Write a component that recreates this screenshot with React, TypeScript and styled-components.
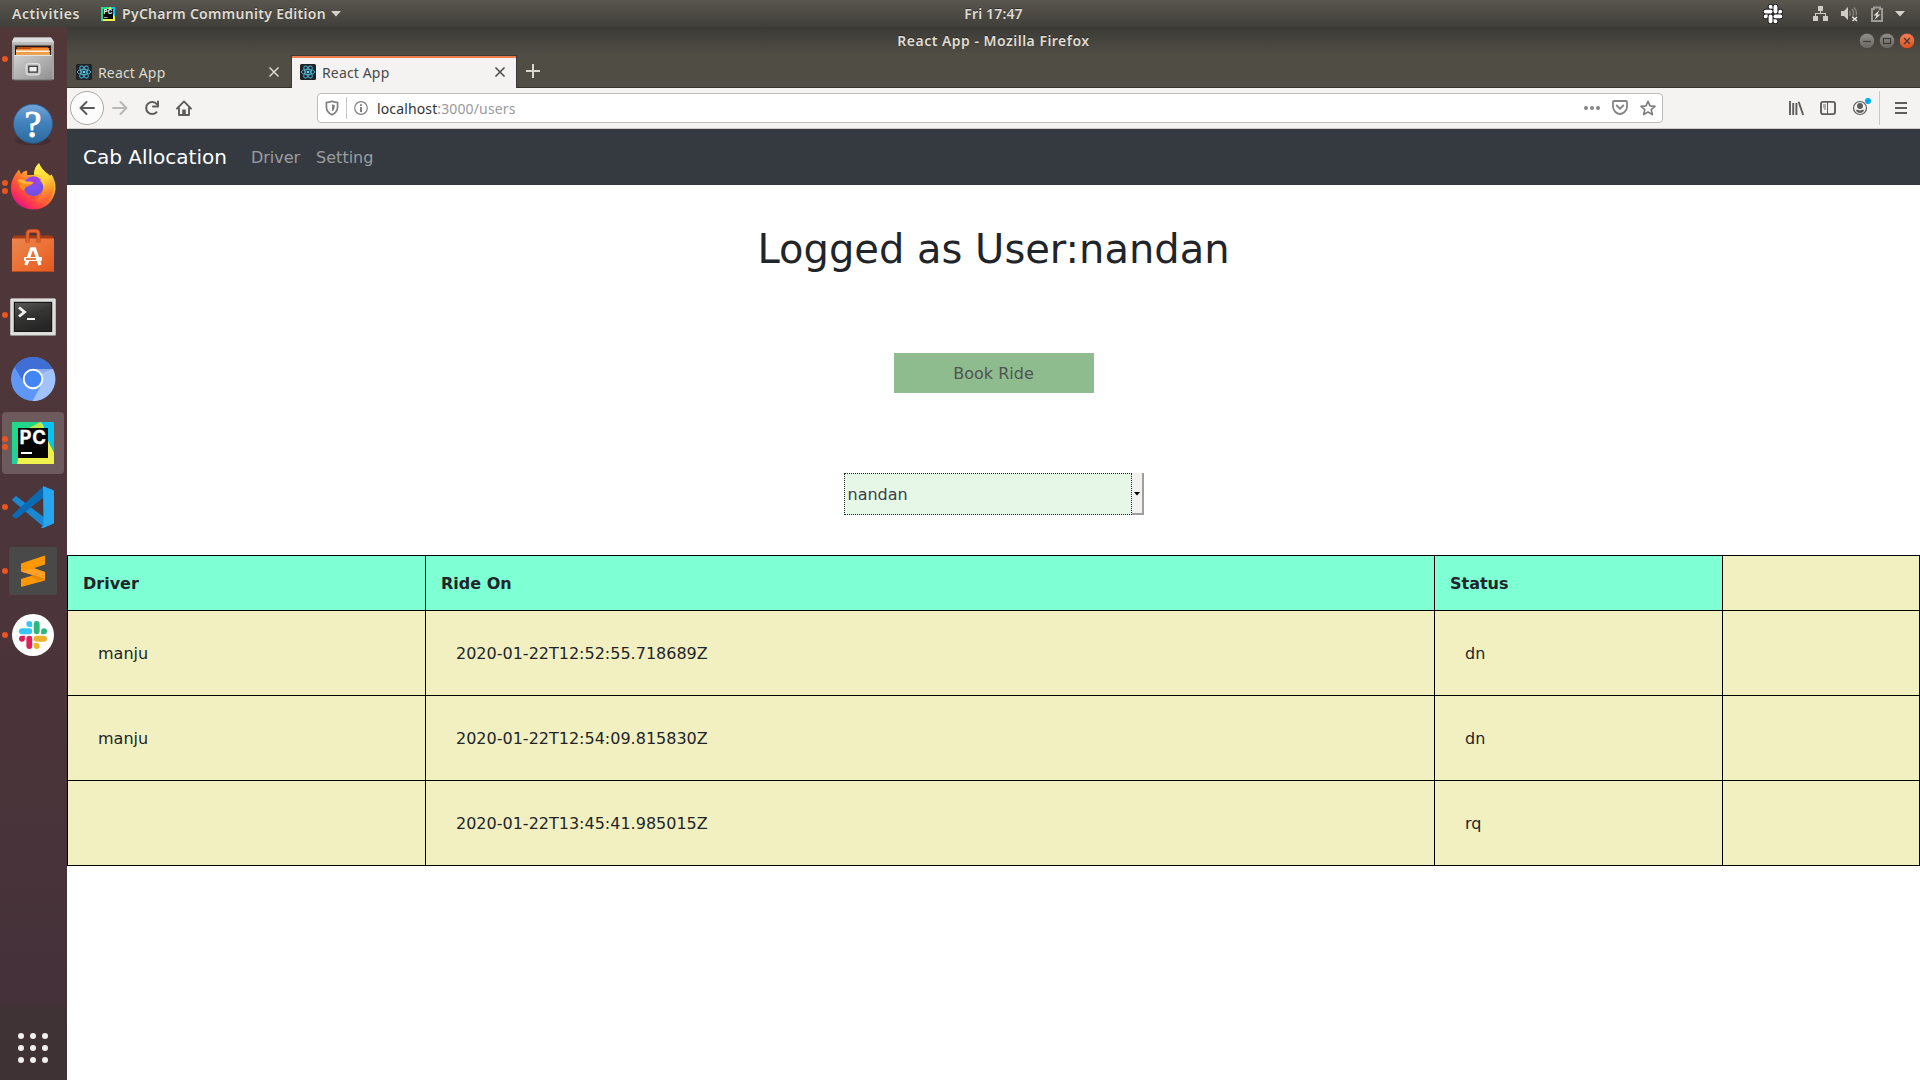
import React from "react";
import styled, { createGlobalStyle } from "styled-components";

const GlobalStyle = createGlobalStyle`
  *, *::before, *::after { box-sizing: border-box; }
  body { margin: 0; background: #fff; overflow: hidden; }
`;

const systemFont = `"Noto Sans", "Open Sans", sans-serif`;
const pageFont = `"DejaVu Sans", sans-serif`;

const Desktop = styled.div`
  width: 1920px;
  height: 1080px;
  display: grid;
  grid-template-rows: 27px 1fr;
  font-family: ${systemFont};
`;

const TopBar = styled.header`
  display: grid;
  grid-template-columns: 1fr auto 1fr;
  align-items: center;
  background: linear-gradient(#59564e, #403f3a);
  color: #dfdbd2;
  font-weight: 600;
  font-size: 14px;
  line-height: 27px;
`;

const BarGroup = styled.div<{ $end?: boolean }>`
  display: flex;
  align-items: center;
  height: 27px;
  padding-left: ${(p) => (p.$end ? 0 : 12)}px;
  padding-right: ${(p) => (p.$end ? 15 : 0)}px;
  justify-content: ${(p) => (p.$end ? "flex-end" : "flex-start")};
`;

const BarText = styled.span<{ $width?: number; $track?: number }>`
  width: ${(p) => (p.$width ? `${p.$width}px` : "auto")};
  letter-spacing: ${(p) => p.$track ?? 0}px;
  white-space: nowrap;
  text-shadow: 0 -1px 0 rgba(0, 0, 0, 0.35);
`;

const Clock = styled(BarText)`
  margin-left: 67px;
`;

const WindowTitle = styled(BarText)`
  padding-bottom: 2px;
`;

const Icon = styled.svg<{ $ml?: number }>`
  display: block;
  flex: none;
  margin-left: ${(p) => p.$ml ?? 0}px;
`;

const Workspace = styled.div`
  display: grid;
  grid-template-columns: 67px 1853px;
  min-height: 0;
`;

const Dock = styled.nav`
  display: flex;
  flex-direction: column;
  background: linear-gradient(#523739 0%, #4d363a 40%, #48333a 80%, #443139 92.5%, #403335 93%, #3f3235 100%);
`;

const DockItem = styled.div<{ $active?: boolean }>`
  position: relative;
  display: flex;
  justify-content: center;
  align-items: center;
  width: 62px;
  height: 62px;
  margin: 1px 3px 1px 2px;
  border-radius: 4px;
  background: ${(p) => (p.$active ? "rgba(255,255,255,0.18)" : "transparent")};
`;

const Running = styled.div`
  position: absolute;
  left: 0;
  top: 0;
  height: 62px;
  display: flex;
  flex-direction: column;
  justify-content: center;
  gap: 2px;
`;

const Dot = styled.i`
  width: 6px;
  height: 6px;
  border-radius: 50%;
  background: #e95420;
`;

const AppsButton = styled.div`
  margin-top: auto;
  height: 64px;
  display: grid;
  grid-template-columns: repeat(3, 6px);
  grid-auto-rows: 6px;
  gap: 6px;
  justify-content: center;
  align-content: center;
  padding-right: 1px;
`;

const AppDot = styled.i`
  border-radius: 50%;
  background: #f2f0ef;
`;

const Window = styled.main`
  display: flex;
  flex-direction: column;
  background: #fff;
`;

const TitleBar = styled.div`
  height: 28px;
  display: grid;
  grid-template-columns: 1fr auto 1fr;
  align-items: center;
  background: linear-gradient(#3b3a35, #504d45);
  color: #dfdbd2;
  font-size: 14px;
  font-weight: 600;
`;

const WindowButtons = styled.div`
  display: flex;
  justify-content: flex-end;
  gap: 4px;
  padding-right: 5px;
`;

const Tabs = styled.div`
  height: 33px;
  display: flex;
  background: #504d45;
  border-bottom: 1px solid #33322d;
`;

const Tab = styled.div<{ $active?: boolean }>`
  width: ${(p) => (p.$active ? 226 : 224)}px;
  height: 33px;
  display: flex;
  align-items: center;
  padding: ${(p) => (p.$active ? "0 10px 0 8px" : "1px 11px 0 9px")};
  color: ${(p) => (p.$active ? "#4a4a4a" : "#dcd9d2")};
  background: ${(p) => (p.$active ? "#f4f3f2" : "transparent")};
  border: solid #3a3934;
  border-width: ${(p) => (p.$active ? "1px 1px 0" : "0")};
  box-shadow: ${(p) => (p.$active ? "inset 0 2px #f27a4f" : "none")};
  font-size: 14px;
  letter-spacing: 0.15px;
`;

const TabTitle = styled.span`
  margin-left: 6px;
  flex: 1;
  white-space: nowrap;
`;

const Toolbar = styled.div`
  height: 41px;
  display: flex;
  align-items: center;
  padding: 0 0 1px 3px;
  background: #f4f3f2;
  border-bottom: 1px solid #cbcac9;
  color: #5d5d5d;
`;

const BackButton = styled.div`
  width: 34px;
  height: 34px;
  border-radius: 50%;
  border: 1px solid #aaa9a8;
  background: #fcfcfc;
  display: grid;
  place-items: center;
`;

const UrlBox = styled.div`
  width: 1346px;
  height: 30px;
  margin-left: 125px;
  display: flex;
  align-items: center;
  padding: 0 6px;
  background: #fff;
  border: 1px solid #bdbcbb;
  border-radius: 4px;
  color: #777;
`;

const Rule = styled.i<{ $height: number; $ml: number }>`
  width: 1px;
  height: ${(p) => p.$height}px;
  margin-left: ${(p) => p.$ml}px;
  background: #c9c8c7;
`;

const Address = styled.span`
  flex: 1;
  margin-left: 9px;
  padding-top: 1px;
  font-size: 14px;
  letter-spacing: 0.13px;
  color: #999;
`;

const Host = styled.span`
  color: #333;
`;

const NavBar = styled.nav`
  height: 56px;
  display: flex;
  align-items: center;
  padding: 0 16px;
  background: #343a40;
  font-family: ${pageFont};
  font-size: 16px;
`;

const Brand = styled.span`
  font-size: 20px;
  color: #fff;
  margin-right: 24px;
`;

const NavLink = styled.span`
  color: rgba(255, 255, 255, 0.5);
  margin-right: 16px;
`;

const Page = styled.section`
  display: flex;
  flex-direction: column;
  align-items: center;
  font-family: ${pageFont};
  font-size: 16px;
  color: #212529;
`;

const Heading = styled.h1`
  margin: 40px 0 80px;
  font-size: 40px;
  line-height: 48px;
  font-weight: 400;
`;

const BookButton = styled.button`
  width: 200px;
  height: 40px;
  border: 0;
  padding: 0;
  background: #8fbc8f;
  color: #505350;
  font: 16px ${pageFont};
`;

const Picker = styled.div`
  width: 300px;
  height: 42px;
  margin: 80px 0 40px;
  display: flex;
`;

const PickerValue = styled.div`
  width: 288px;
  border: 1px dotted #222;
  background: #e6f7e8;
  color: #3c4043;
  line-height: 41px;
  padding-left: 3px;
`;

const PickerArrow = styled.div`
  width: 12px;
  display: grid;
  place-items: center;
  padding: 1px 0 0 1px;
  background: #f2f1f0;
  border: solid #9f9e9d;
  border-width: 0 2px 2px 0;
`;

const Table = styled.table`
  width: 1853px;
  table-layout: fixed;
  border-collapse: separate;
  border-spacing: 0;
  border: solid #000;
  border-width: 1px 0 0 1px;
  background: #f2f0c1;
`;

const HeadCell = styled.th<{ $blank?: boolean; $width: number }>`
  width: ${(p) => p.$width}px;
  height: 55px;
  padding: 0 15px;
  text-align: left;
  background: ${(p) => (p.$blank ? "transparent" : "#7fffd4")};
  border: solid #000;
  border-width: 0 1px 1px 0;
`;

const Cell = styled.td`
  height: 85px;
  padding: 0 30px;
  border: solid #000;
  border-width: 0 1px 1px 0;
`;

const SlackMark = ({ colors }: { colors: string[] }) => (
  <>
    {colors.map((c, i) => (
      <g key={i} fill={c} transform={`rotate(${i * 90} 12 12)`}>
        <path d="M5.042 15.165a2.520 2.520 0 1 1-2.520-2.520h2.520z" />
        <rect x="6.313" y="12.645" width="5.042" height="11.355" rx="2.521" />
      </g>
    ))}
  </>
);

const FilesIcon = () => (
  <Icon width="48" height="48" viewBox="0 -0.5 48 48">
    <defs>
      <linearGradient id="cab" x2="1" y2="1">
        <stop stopColor="#d0d0d0" />
        <stop offset="1" stopColor="#909090" />
      </linearGradient>
    </defs>
    <path d="M5 2h37l3 4v38H3V6z" fill="#a4a4a4" />
    <path d="M5 2h37l3 4.500H3z" fill="#dcdcdc" />
    <path d="M3 6.500h42V9H3z" fill="#bdbdbd" />
    <rect x="6" y="10" width="36" height="10" fill="#291c16" />
    <rect x="8" y="11.500" width="31" height="8" fill="#b64a12" />
    <path d="M7 13.500h14l2-1h17v8H7z" fill="#f08a34" />
    <path d="M7 15h34v1.500H7z" fill="#fff2df" />
    <path d="M7 17h34v3H7z" fill="#eca24e" />
    <rect x="5" y="19.500" width="38" height="25" rx="1" fill="url(#cab)" />
    <path d="M5 20h38" stroke="#e4e4e4" />
    <path d="M5 44.500h38" stroke="#6f6f6f" />
    <rect x="17" y="28" width="14" height="11.500" rx="2.500" fill="#c7c7c7" stroke="#e2e2e2" />
    <rect x="19.800" y="30.800" width="8.500" height="5.800" fill="#eee" stroke="#3a3a3a" strokeWidth="1.300" />
  </Icon>
);

const HelpIcon = () => (
  <Icon width="48" height="48" viewBox="0 -0.8 48 48">
    <defs>
      <linearGradient id="help" x2="0" y2="1">
        <stop stopColor="#74a4da" />
        <stop offset="0.45" stopColor="#4383bd" />
        <stop offset="1" stopColor="#2c6ba0" />
      </linearGradient>
    </defs>
    <ellipse cx="24" cy="41" rx="18" ry="4.500" fill="#000" opacity="0.15" />
    <circle cx="24" cy="24" r="19.500" fill="url(#help)" stroke="#265f90" strokeWidth="0.800" />
    <text x="24" y="37" textAnchor="middle" fontFamily="Liberation Serif, serif" fontSize="38" fill="#fff" stroke="#fff" strokeWidth="0.900">?</text>
  </Icon>
);

const FirefoxIcon = () => (
  <Icon width="48" height="48" viewBox="0 1 48 48">
    <defs>
      <linearGradient id="fxBody" x1="0.85" y1="0.1" x2="0.2" y2="0.95">
        <stop stopColor="#fff44f" />
        <stop offset="0.3" stopColor="#ffb52e" />
        <stop offset="0.55" stopColor="#ff6b2d" />
        <stop offset="0.8" stopColor="#ff3750" />
        <stop offset="1" stopColor="#e4108a" />
      </linearGradient>
      <linearGradient id="fxTail" x2="0.2" y2="1">
        <stop stopColor="#fff44f" />
        <stop offset="0.45" stopColor="#ffd93a" />
        <stop offset="0.75" stopColor="#ff9a2a" />
        <stop offset="1" stopColor="#ff6038" />
      </linearGradient>
      <radialGradient id="fxGlobe" cx="0.5" cy="0.2" r="0.8">
        <stop stopColor="#b833e1" />
        <stop offset="0.4" stopColor="#8450ee" />
        <stop offset="1" stopColor="#6e50d8" />
      </radialGradient>
    </defs>
    <path d="M6.500 12 L10 7.500 L12 12 Q14 9 18 8.500 L18 13 L25 13 Q25 5 30 1.200 Q33 8 39 12 L41 14 L42.500 12.500 Q47 20 46.500 27 C45 40 36 47.500 24 47.500 C11 47 2 38 2 26 C2 20 4 16 6.500 12z" fill="url(#fxBody)" />
    <path d="M30 1.200 Q32 7 38 11.500 L41 14 L42.500 12.500 Q46 19 45 27 Q43 36 36 40 Q31 42 26 38 Q35 34 35 25 Q34 17 25 13 Q25 5 30 1.200z" fill="url(#fxTail)" />
    <circle cx="24.500" cy="24.200" r="10" fill="url(#fxGlobe)" />
    <path d="M25 13.500 Q30 14 33 18.500 L30.500 18 Q35 22 34.500 27 Q37 21 34 17 Q31 12.500 25 12z" fill="#ffc935" />
    <path d="M8 18 Q14 16 17 19.500 L24.500 20 Q24 22.500 19.500 24 Q15 25 15.500 29 Q11 28 9.500 22z" fill="#ff8a1d" />
    <path d="M8 18 Q14 16 17 19.500 L24.500 20 Q23 22.500 18 22.500 Q12 21.500 8 18z" fill="#ffb13d" />
  </Icon>
);

const SoftwareIcon = () => (
  <Icon width="48" height="48" viewBox="0 -1 48 48">
    <defs>
      <linearGradient id="bag" x2="1" y2="1">
        <stop stopColor="#e8864f" />
        <stop offset="0.5" stopColor="#ec7136" />
        <stop offset="1" stopColor="#e0591f" />
      </linearGradient>
    </defs>
    <path d="M3 11l2-3.500h38L45 11z" fill="#a63c12" />
    <rect x="3" y="10.500" width="42" height="33.500" fill="url(#bag)" />
    <path d="M18.500 14.500V6q0-3 3-3h5q3 0 3 3v8.500" fill="none" stroke="#b5431a" strokeWidth="4" />
    <path d="M18.500 14.500V6q0-3 3-3h5q3 0 3 3v8.500" fill="none" stroke="#e4652f" strokeWidth="2.400" />
    <path d="M17 37l5.500-16h3L31 37" fill="none" stroke="#fff" strokeWidth="3.400" />
    <rect x="15" y="29" width="18" height="4" rx="1" fill="#fff" />
    <path d="M17 31h10" stroke="#e65a20" strokeWidth="1.600" />
    <path d="M3 43.500h42" stroke="#b54a1c" />
  </Icon>
);

const TerminalIcon = () => (
  <Icon width="48" height="48" viewBox="0 -1 48 48">
    <defs>
      <linearGradient id="term" x2="0.4" y2="1">
        <stop stopColor="#5c5c5a" />
        <stop offset="0.5" stopColor="#353534" />
        <stop offset="1" stopColor="#262626" />
      </linearGradient>
    </defs>
    <rect x="1" y="6.500" width="46" height="37.500" rx="1.500" fill="#8f8f8d" />
    <rect x="1.500" y="6.500" width="45" height="36.500" rx="1" fill="#dededc" />
    <rect x="4.500" y="9.500" width="39" height="30.500" fill="#8b8b89" />
    <rect x="5.500" y="10.500" width="37" height="29" fill="url(#term)" stroke="#171717" />
    <path d="M10 15.500l5.500 4.500-5.500 4.500" fill="none" stroke="#f2f2f0" strokeWidth="2.800" />
    <path d="M18 27h8" stroke="#f2f2f0" strokeWidth="2" />
  </Icon>
);

const ChromiumIcon = () => (
  <Icon width="48" height="48" viewBox="0 0 48 48">
    <circle cx="24" cy="24" r="22" fill="#5f97f6" />
    <path d="M24 14h20a22 22 0 0 1-20.500 32l9.200-17z" fill="#a1c2fa" />
    <path d="M5.500 12A22 22 0 0 1 43.600 14H24a10 10 0 0 0-9.500 13z" fill="#3f6fd5" />
    <path d="M24 14h19.600l-10 4z" fill="#7ea3e4" opacity="0.7" />
    <circle cx="24" cy="24" r="9.300" fill="#4285f4" stroke="#fff" strokeWidth="1.900" />
  </Icon>
);

const PyCharmIcon = ({ size = 48 }: { size?: number }) => (
  <Icon width={size} height={size} viewBox={size === 48 ? "0 0 48 48" : "3 3 42 42"}>
    <path d="M3 3h42v42H3z" fill="#21d789" />
    <path d="M3 24L14 45H3z" fill="#22cfa0" />
    <path d="M31 3h14v28L34 14z" fill="#07c3f2" />
    <path d="M15 12L32 3l2 3 5 16 6 12v11H8z" fill="#eef24a" />
    <path d="M16 11L32 3l2 8z" fill="#b7e84e" />
    <path d="M3 3h24L12 14 3 34z" fill="#21d789" />
    <rect x="9" y="9" width="30" height="30" fill="#050505" />
    <text x="10.500" y="25.400" fontFamily="Inter, sans-serif" fontWeight="700" fontSize="18.500" textLength="26.500" fill="#fff" stroke="#fff" strokeWidth="0.300">PC</text>
    <rect x="12" y="33" width="11" height="2" fill="#fff" />
  </Icon>
);

const CodeIcon = () => (
  <Icon width="48" height="48" viewBox="0 0 48 48">
    <path d="M3.500 16l3.500-3 29 22v10L4 18q-1-1-.5-2z" fill="#1b86d2" />
    <path d="M3.500 32L34.500 3.500 35 14 8 35z" fill="#0c66ab" />
    <path d="M3.500 32q-.500 1 .500 2l2.500 1.500q1 0 2-.700L35 14V3z" fill="#0a6ab3" />
    <path d="M34 3l11 4.500v33L34 45q-1 .3-2-.5l2.500-2z" fill="#26a6f1" />
  </Icon>
);

const SublimeIcon = () => (
  <Icon width="48" height="48" viewBox="0 0 48 48">
    <rect width="48" height="48" rx="2.500" fill="#494949" />
    <path d="M12 16.500L36 8.500v9l-13 4.200L36 25v8.500L12 40v-8l13-4-13-3.500z" fill="#ff9800" />
    <path d="M12 24.500l13-3.500 11 4v7z" fill="#ffa126" />
    <path d="M25 28l11 4-7 2-7-5z" fill="#d87e0a" opacity="0.6" />
  </Icon>
);

const SlackIcon = () => (
  <Icon width="48" height="48" viewBox="0 0 48 48">
    <circle cx="24" cy="24" r="21" fill="#fff" />
    <g transform="translate(10 10) scale(1.167)">
      <SlackMark colors={["#e01e5a", "#36c5f0", "#2eb67d", "#ecb22e"]} />
    </g>
  </Icon>
);

const ReactIcon = () => (
  <Icon width="16" height="16" viewBox="0 0 16 16">
    <rect width="16" height="16" rx="1.500" fill="#20232a" />
    <g fill="none" stroke="#4fb4cf" strokeWidth="0.900">
      <ellipse cx="8" cy="8" rx="6.700" ry="2.600" />
      <ellipse cx="8" cy="8" rx="6.700" ry="2.600" transform="rotate(60 8 8)" />
      <ellipse cx="8" cy="8" rx="6.700" ry="2.600" transform="rotate(120 8 8)" />
    </g>
    <circle cx="8" cy="8" r="1.300" fill="#61dafb" />
  </Icon>
);

const CloseIcon = () => (
  <Icon width="12" height="12" viewBox="0 0 12 12" fill="none" stroke="currentColor" strokeWidth="1.500">
    <path d="M1.500 1.500l9 9m0-9l-9 9" />
  </Icon>
);

const Caret = ({ ml }: { ml: number }) => (
  <Icon $ml={ml} width="10" height="6" viewBox="0 0 10 6">
    <path d="M0 0h10L5 5.500z" fill="#d5d2ca" />
  </Icon>
);

const WindowButton = ({ kind }: { kind: "min" | "max" | "close" }) => (
  <Icon width="16" height="16" viewBox="0 0 16 16">
    <defs>
      <linearGradient id={`wb-${kind}`} x2="0" y2="1">
        <stop stopColor={kind === "close" ? "#f48059" : "#92908a"} />
        <stop offset="1" stopColor={kind === "close" ? "#e04f1c" : "#67655f"} />
      </linearGradient>
    </defs>
    <circle cx="8" cy="8" r="7.700" fill={`url(#wb-${kind})`} stroke="#383731" strokeWidth="0.600" />
    <g fill="none" stroke="#3c3b37" strokeWidth="1.200">
      {kind === "min" && <path d="M4 8.500h8" />}
      {kind === "max" && <rect x="4.500" y="5.500" width="7" height="5" />}
      {kind === "close" && <path d="M5 5l6 6m0-6l-6 6" />}
    </g>
  </Icon>
);

const dockApps = [
  { icon: <FilesIcon />, windows: 1 },
  { icon: <HelpIcon />, windows: 0 },
  { icon: <FirefoxIcon />, windows: 2 },
  { icon: <SoftwareIcon />, windows: 0 },
  { icon: <TerminalIcon />, windows: 1 },
  { icon: <ChromiumIcon />, windows: 0 },
  { icon: <PyCharmIcon />, windows: 2, active: true },
  { icon: <CodeIcon />, windows: 1 },
  { icon: <SublimeIcon />, windows: 1 },
  { icon: <SlackIcon />, windows: 1 },
];

const rides = [
  ["manju", "2020-01-22T12:52:55.718689Z", "dn"],
  ["manju", "2020-01-22T12:54:09.815830Z", "dn"],
  ["", "2020-01-22T13:45:41.985015Z", "rq"],
];

export default function App() {
  return (
    <Desktop>
      <GlobalStyle />
      <TopBar>
        <BarGroup>
          <BarText $width={89} $track={0.55}>Activities</BarText>
          <PyCharmIcon size={14} />
          <Icon width="7" height="1" />
          <BarText $width={204} $track={0.3}>PyCharm Community Edition</BarText>
          <Caret ml={5} />
        </BarGroup>
        <Clock $track={0.15}>Fri 17:47</Clock>
        <BarGroup $end>
          <Icon width="20" height="20" viewBox="-1 -1 26 26">
            <g stroke="#222" strokeWidth="2.500">
              <SlackMark colors={["#222", "#222", "#222", "#222"]} />
            </g>
            <SlackMark colors={["#fff", "#fff", "#fff", "#fff"]} />
          </Icon>
          <Icon $ml={30} width="15" height="15" viewBox="0 0 15 15" fill="#cfccc5">
            <path d="M5 0h5v5H5zM0 10h5v5H0zM10 10h5v5h-5zM7 5h1v2h5v3h-1V8H3v2H2V7h5z" />
          </Icon>
          <Icon $ml={13} width="17" height="16" viewBox="0 0 17 16">
            <path d="M0 5h3l4-4v13l-4-4H0z" fill="#cfccc5" />
            <path d="M8.500 5q1.500 2.500 0 5M11 3q3 4.500 0 9M13 1.500q3.500 4 2 8" fill="none" stroke="#85837d" strokeWidth="1.400" />
            <path d="M11.500 11l4.500 4m0-4l-4.500 4" stroke="#e5e2da" strokeWidth="1.600" />
          </Icon>
          <Icon $ml={13} width="12" height="16" viewBox="0 0 12 16">
            <path d="M3 1.500h6V3h2v12H1V3h2z" fill="none" stroke="#9d9b95" strokeWidth="2" />
            <path d="M8.500 4L2.500 9.500h3L3.500 14l6-5.500h-3z" fill="#dfdcd4" />
          </Icon>
          <Caret ml={12} />
        </BarGroup>
      </TopBar>

      <Workspace>
        <Dock>
          {dockApps.map((app, i) => (
            <DockItem key={i} $active={app.active}>
              <Running>
                {Array.from({ length: app.windows }, (_, n) => (
                  <Dot key={n} />
                ))}
              </Running>
              {app.icon}
            </DockItem>
          ))}
          <AppsButton>
            {Array.from({ length: 9 }, (_, n) => (
              <AppDot key={n} />
            ))}
          </AppsButton>
        </Dock>

        <Window>
          <TitleBar>
            <span />
            <WindowTitle $track={0.48}>React App - Mozilla Firefox</WindowTitle>
            <WindowButtons>
              <WindowButton kind="min" />
              <WindowButton kind="max" />
              <WindowButton kind="close" />
            </WindowButtons>
          </TitleBar>

          <Tabs>
            <Tab>
              <ReactIcon />
              <TabTitle>React App</TabTitle>
              <CloseIcon />
            </Tab>
            <Tab $active>
              <ReactIcon />
              <TabTitle>React App</TabTitle>
              <CloseIcon />
            </Tab>
            <Icon $ml={9} width="14" height="32" viewBox="0 0 14 32" stroke="#d9d6ce" strokeWidth="2">
              <path d="M0 16h14M7 9v14" />
            </Icon>
          </Tabs>

          <Toolbar>
            <BackButton>
              <Icon width="16" height="16" viewBox="0 0 16 16" fill="none" stroke="#5a5a5a" strokeWidth="2" strokeLinecap="round" strokeLinejoin="round">
                <path d="M7.500 2L1.500 8l6 6M1.500 8H15" />
              </Icon>
            </BackButton>
            <Icon $ml={8} width="16" height="16" viewBox="0 0 16 16" fill="none" stroke="#b9b8b7" strokeWidth="2" strokeLinecap="round" strokeLinejoin="round">
              <path d="M8.500 2l6 6-6 6M14.500 8H1" />
            </Icon>
            <Icon $ml={16} width="16" height="16" viewBox="0 0 16 16" fill="none" stroke="#5d5d5d" strokeWidth="2">
              <path d="M12.500 12.200A6 6 0 1 1 12.800 4.200" strokeLinecap="round" />
              <path d="M14 1.500V6.500H9" strokeLinejoin="round" strokeLinecap="round" />
            </Icon>
            <Icon $ml={16} width="16" height="16" viewBox="0 0 16 16" fill="none" stroke="#5d5d5d" strokeWidth="1.900">
              <path d="M1 8.600L8 1.400l7 7.200M3 7.500V15h10V7.500" strokeLinejoin="round" strokeLinecap="round" />
              <path d="M6.200 15v-5.500h3.600V15z" fill="#5d5d5d" stroke="none" />
            </Icon>
            <UrlBox>
              <Icon $ml={1} width="14" height="16" viewBox="0 0 14 16">
                <path d="M7 1.200q2.500 1.200 5.600 1.300V7q0 5-5.600 7.800Q1.400 12 1.400 7V2.500Q4.500 2.400 7 1.200z" fill="none" stroke="#808080" strokeWidth="1.700" />
                <path d="M7 4.200v7.300Q4.300 9.800 4.300 7V4.900Q5.700 4.800 7 4.200z" fill="#808080" transform="matrix(-1 0 0 1 14 0)" />
              </Icon>
              <Rule $height={22} $ml={7} />
              <Icon $ml={7} width="14" height="14" viewBox="0 0 14 14">
                <circle cx="7" cy="7" r="6.300" fill="none" stroke="#808080" strokeWidth="1.200" />
                <path d="M6 3.200h2v1.700H6zM6 6h2v5H6z" fill="#808080" />
              </Icon>
              <Address>
                <Host>localhost</Host>:3000/users
              </Address>
              <Icon width="16" height="4" viewBox="0 0 16 4" fill="#858585">
                <circle cx="2" cy="2" r="2" />
                <circle cx="8" cy="2" r="2" />
                <circle cx="14" cy="2" r="2" />
              </Icon>
              <Icon $ml={12} width="16" height="15" viewBox="0 0 16 15" fill="none" stroke="#858585">
                <path d="M2 1h12q1 0 1 1v5q0 3-2.500 5T8 14q-2.500 0-4.600-2T1 7V2q0-1 1-1z" strokeWidth="1.800" />
                <path d="M4.700 5.500L8 8.700l3.300-3.200" strokeWidth="1.800" strokeLinecap="round" />
              </Icon>
              <Icon $ml={12} width="16" height="16" viewBox="0 0 16 16">
                <path d="M8 1.300l2 4.500 5 .5-3.800 3.300 1.200 5L8 12l-4.400 2.600 1.200-5L1 6.300l5-.5z" fill="none" stroke="#808080" strokeWidth="1.700" strokeLinejoin="round" />
              </Icon>
            </UrlBox>
            <Icon $ml={125} width="16" height="16" viewBox="0 0 16 16" stroke="#5d5d5d" strokeWidth="1.900">
              <path d="M2 1v14M5.200 3v12M8.400 3v12M10.600 1.800L15.200 15" />
            </Icon>
            <Icon $ml={16} width="16" height="16" viewBox="0 0 16 16">
              <rect x="1" y="1.900" width="14" height="12.200" rx="2" fill="none" stroke="#5d5d5d" strokeWidth="1.900" />
              <path d="M7.500 2v12" stroke="#5d5d5d" />
              <path d="M3 5h3M3 7h3M4 9h2" stroke="#5d5d5d" strokeWidth="0.900" />
            </Icon>
            <Icon $ml={16} width="19" height="20" viewBox="0 0 19 20">
              <circle cx="8" cy="10" r="6.500" fill="none" stroke="#5d5d5d" strokeWidth="1.200" />
              <circle cx="8" cy="8" r="3" fill="#5d5d5d" />
              <path d="M3.600 11.500q1 .7 2.200.3 2.200 1.400 4.400 0 1.200.4 2.200-.3-1.200 3.500-4.400 3.500t-4.400-3.500z" fill="#5d5d5d" />
              <circle cx="16" cy="3" r="3" fill="#00a9f4" />
            </Icon>
            <Rule $height={34} $ml={8} />
            <Icon $ml={15} width="12" height="12" viewBox="0 0 12 12" fill="#5d5d5d">
              <path d="M0 0h12v2H0zM0 5h12v2H0zM0 10h12v2H0z" />
            </Icon>
          </Toolbar>

          <NavBar>
            <Brand>Cab Allocation</Brand>
            <NavLink>Driver</NavLink>
            <NavLink>Setting</NavLink>
          </NavBar>

          <Page>
            <Heading>Logged as User:nandan</Heading>
            <BookButton>Book Ride</BookButton>
            <Picker>
              <PickerValue>nandan</PickerValue>
              <PickerArrow>
                <Icon width="6" height="4" viewBox="0 0 6 4">
                  <path d="M0 0h6L3 3.500z" />
                </Icon>
              </PickerArrow>
            </Picker>
            <Table>
              <thead>
                <tr>
                  <HeadCell $width={358}>Driver</HeadCell>
                  <HeadCell $width={1009}>Ride On</HeadCell>
                  <HeadCell $width={288}>Status</HeadCell>
                  <HeadCell $width={197} $blank />
                </tr>
              </thead>
              <tbody>
                {rides.map(([driver, time, status]) => (
                  <tr key={time}>
                    <Cell>{driver}</Cell>
                    <Cell>{time}</Cell>
                    <Cell>{status}</Cell>
                    <Cell />
                  </tr>
                ))}
              </tbody>
            </Table>
          </Page>
        </Window>
      </Workspace>
    </Desktop>
  );
}
